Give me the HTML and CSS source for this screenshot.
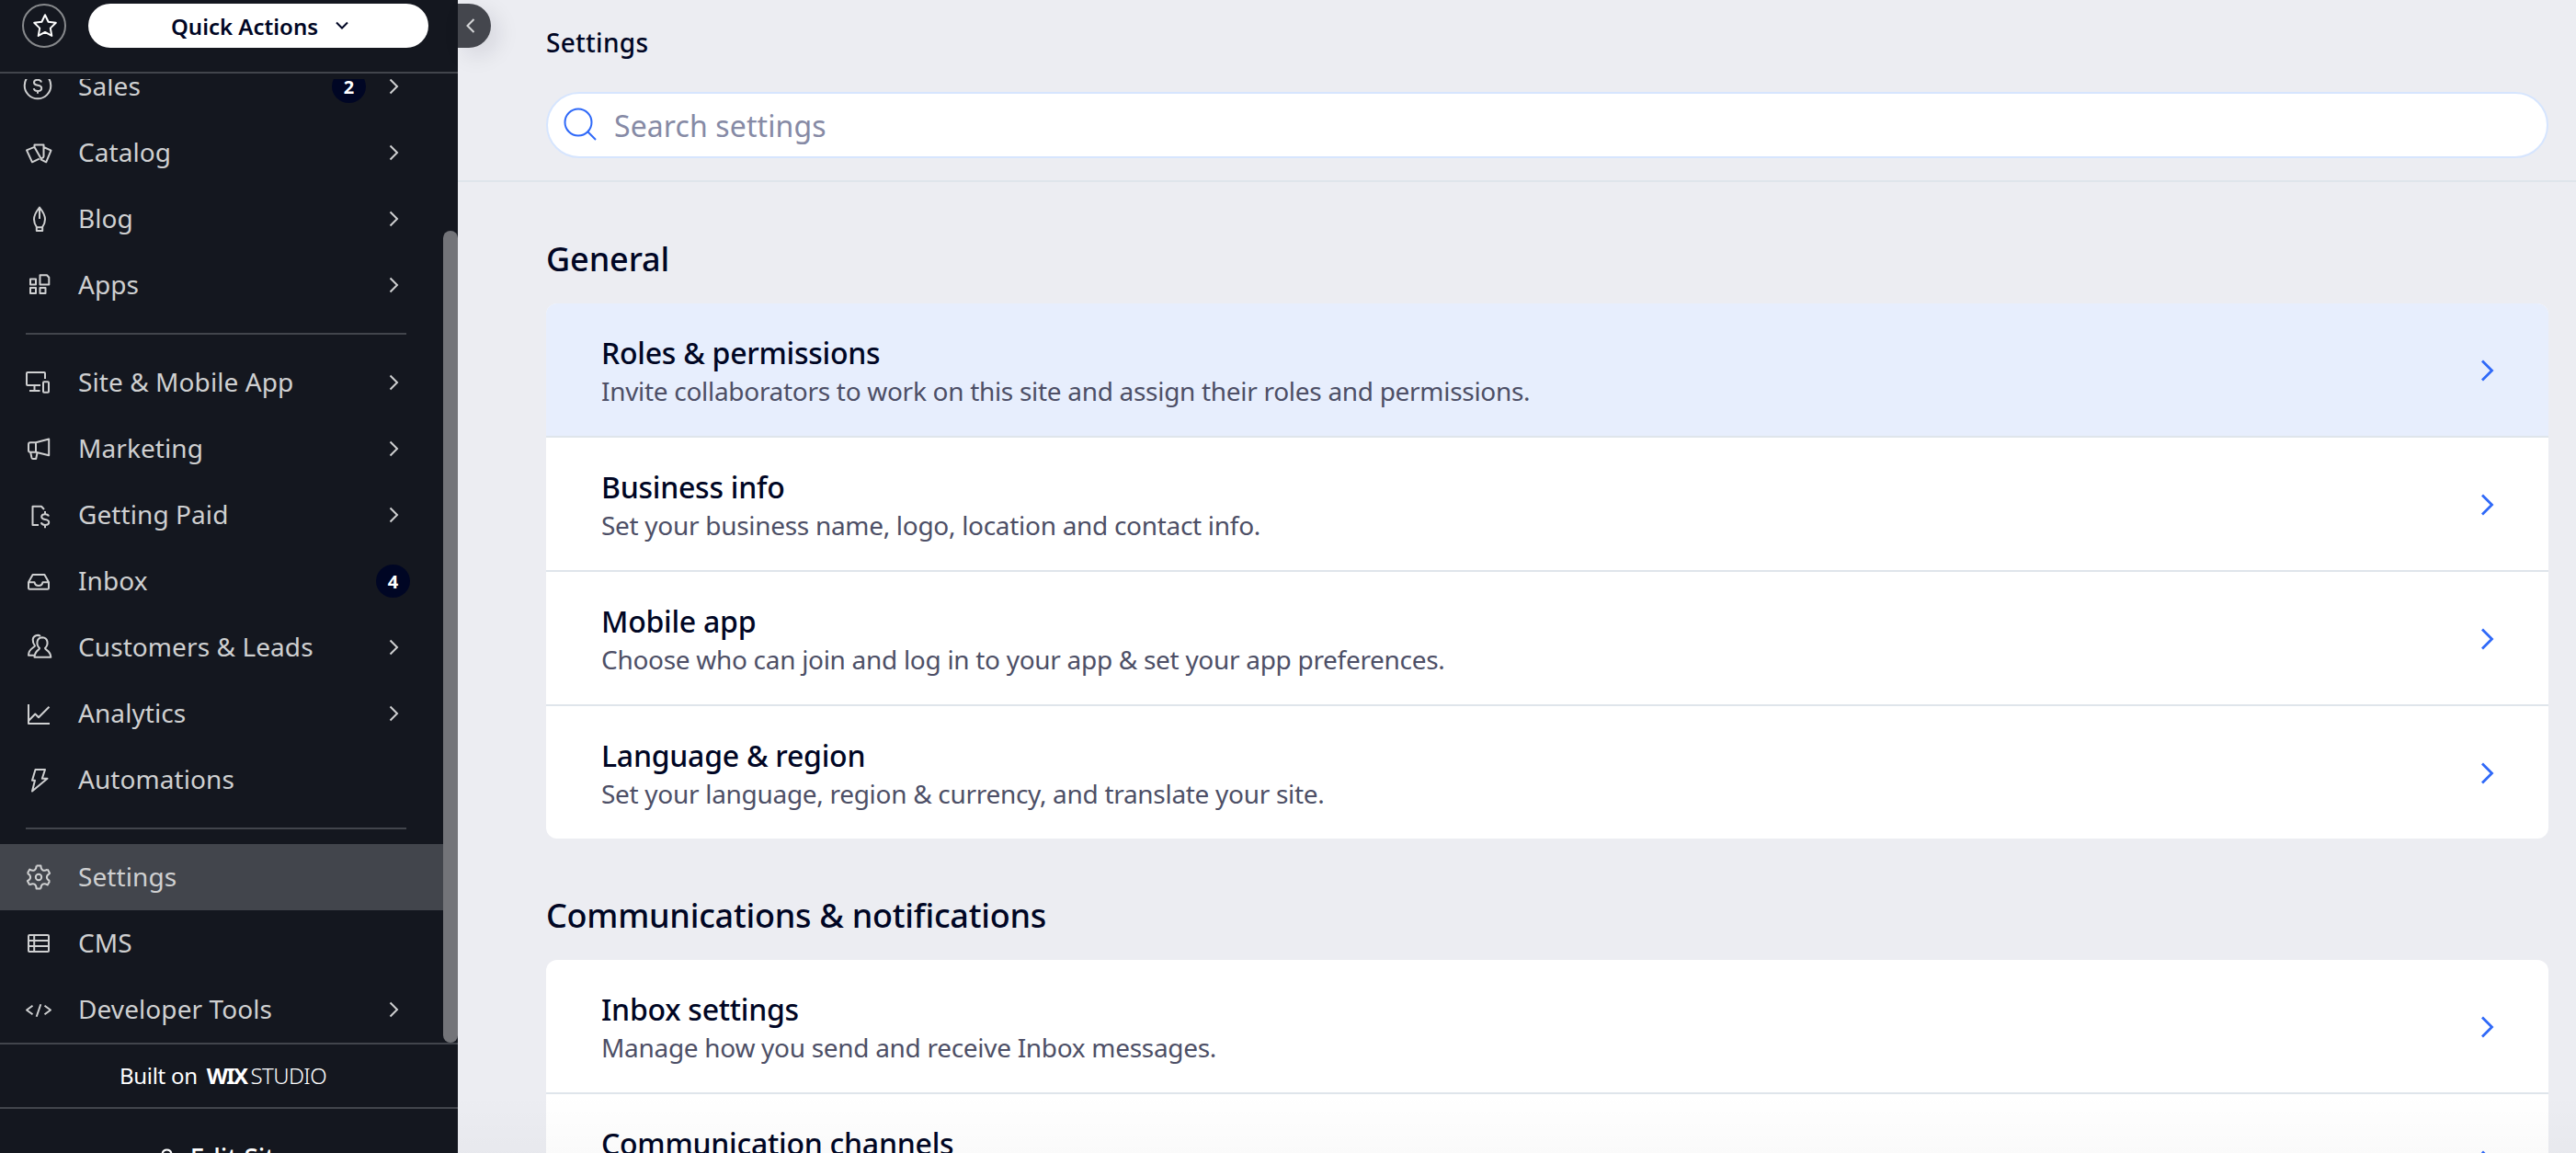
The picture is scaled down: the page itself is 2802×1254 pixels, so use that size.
FILE: index.html
```html
<!DOCTYPE html>
<html lang="en">

<head>
    <meta charset="UTF-8">
    <meta name="viewport" content="width=device-width, initial-scale=1.0">
    <title>Settings</title>
    <link rel="stylesheet" href="styles.css">
</head>

<body>
    <div class="app">
        <aside class="sidebar">
            <div class="sidebar-header">
                <button class="star-button">
                    <svg width="30" height="30" viewBox="0 0 30 30"><path d="M15 3.2l3.6 7.6 8.2 1-6 5.8 1.5 8.3-7.3-4-7.3 4 1.5-8.3-6-5.8 8.2-1z"/></svg>
                </button>
                <button class="quick-actions">
                    Quick Actions
                    <svg width="16" height="12" viewBox="0 0 16 12"><path d="M2 2.5l6 6 6-6"/></svg>
                </button>
            </div>

            <nav class="nav">
                <ul class="nav-list">
                    <li class="nav-item">
                        <svg class="icon" viewBox="0 0 36 36"><circle cx="17" cy="17" r="14.3"/><path d="M21 13.5c-.3-1.8-1.8-2.7-4-2.7s-4 1-4 3 1.8 2.7 4 3 4.2 1.2 4.2 3.2-2 3-4.2 3-4-1-4.2-2.8M17 8v2.8M17 23v2.8"/></svg>
                        <span class="label">Sales</span>
                        <span class="badge">2</span>
                        <svg class="chevron" viewBox="0 0 36 36"><path d="M14.5 10.5l7.5 7.5-7.5 7.5"/></svg>
                    </li>
                    <li class="nav-item">
                        <svg class="icon" viewBox="0 0 36 36"><path d="M13.5 11.8L5 15.3l6 13 7.8-3.6M13.5 9.5h10V22q-.2 2-3 2.3L13.5 12zM23.5 12l8 3.7-5.3 12.6-6.4-3.2"/></svg>
                        <span class="label">Catalog</span>
                        <svg class="chevron" viewBox="0 0 36 36"><path d="M14.5 10.5l7.5 7.5-7.5 7.5"/></svg>
                    </li>
                    <li class="nav-item">
                        <svg class="icon" viewBox="0 0 36 36"><path d="M19 5.5c-4 5-6 9-6 13 0 3.5 1 6 3 8.7h6c2-2.7 3-5.2 3-8.7 0-4-2-8-6-13zM19 5.5V18M15.8 27.2h6.4v3.7h-6.4z"/></svg>
                        <span class="label">Blog</span>
                        <svg class="chevron" viewBox="0 0 36 36"><path d="M14.5 10.5l7.5 7.5-7.5 7.5"/></svg>
                    </li>
                    <li class="nav-item">
                        <svg class="icon" viewBox="0 0 36 36"><path d="M9 11.5h6v6H9zM9 21h6v6H9zM19.5 21h6v6h-6zM19.5 7.2H27l2.3 2.5v7.8h-9.8z"/></svg>
                        <span class="label">Apps</span>
                        <svg class="chevron" viewBox="0 0 36 36"><path d="M14.5 10.5l7.5 7.5-7.5 7.5"/></svg>
                    </li>
                    <li class="nav-divider"></li>
                    <li class="nav-item">
                        <svg class="icon" viewBox="0 0 36 36"><path d="M25 14V8q0-1-1-1H6q-1 0-1 1v12q0 1 1 1h14M13.5 21v6M8 27h11.5"/><rect x="23" y="17.3" width="6" height="11.5" rx="1"/></svg>
                        <span class="label">Site &amp; Mobile App</span>
                        <svg class="chevron" viewBox="0 0 36 36"><path d="M14.5 10.5l7.5 7.5-7.5 7.5"/></svg>
                    </li>
                    <li class="nav-item">
                        <svg class="icon" viewBox="0 0 36 36"><path d="M15 11.2H9q-2 0-2 2v6.6q0 2 2 2h6zM15 11.2l14.2-3.7v17.8L15 21.8M9.2 22l1.3 6q.3 1 1.3 1h3.4l1.2-6"/></svg>
                        <span class="label">Marketing</span>
                        <svg class="chevron" viewBox="0 0 36 36"><path d="M14.5 10.5l7.5 7.5-7.5 7.5"/></svg>
                    </li>
                    <li class="nav-item">
                        <svg class="icon" viewBox="0 0 36 36"><path d="M24 12l-3-3.2h-9.5V29H18M29 19.5c-.4-1.6-1.8-2.3-4-2.3s-3.8.9-3.8 2.8 1.7 2.6 3.8 2.9 4.2 1 4.2 3.1-2 2.9-4.2 2.9-3.8-.8-4.2-2.6M25 14v3.2M25 28.9v3.3"/></svg>
                        <span class="label">Getting Paid</span>
                        <svg class="chevron" viewBox="0 0 36 36"><path d="M14.5 10.5l7.5 7.5-7.5 7.5"/></svg>
                    </li>
                    <li class="nav-item">
                        <svg class="icon" viewBox="0 0 36 36"><path d="M7 19.3l4.6-8.3h12.8l4.6 8.3v6.2q0 1.3-1.3 1.3H8.3Q7 26.8 7 25.5zM7 19.3h6.5c.5 2.5 2 3.7 4.5 3.7s4-1.2 4.5-3.7H29"/></svg>
                        <span class="label">Inbox</span>
                        <span class="badge">4</span>
                    </li>
                    <li class="nav-item">
                        <svg class="icon" viewBox="0 0 36 36"><path d="M19 19c-4-4-3.5-11.5 3-11.8 6.5.3 7 7.8 3 11.8 0 2 6 2.5 6.3 9.8H13.5C13.8 21.5 19 21 19 19z"/><path d="M20 6c-2.5-2.2-7.8-1-8.3 3.5-.2 3 .8 5 2.3 7-1.5 2.5-7 3-7 10.3h6"/></svg>
                        <span class="label">Customers &amp; Leads</span>
                        <svg class="chevron" viewBox="0 0 36 36"><path d="M14.5 10.5l7.5 7.5-7.5 7.5"/></svg>
                    </li>
                    <li class="nav-item">
                        <svg class="icon" viewBox="0 0 36 36"><path d="M7 8v21h23M7.5 25.5l6.8-7 3.7 3.7L29.5 10.7"/></svg>
                        <span class="label">Analytics</span>
                        <svg class="chevron" viewBox="0 0 36 36"><path d="M14.5 10.5l7.5 7.5-7.5 7.5"/></svg>
                    </li>
                    <li class="nav-item">
                        <svg class="icon" viewBox="0 0 36 36"><path d="M14.5 7H25l-3.2 9.8h5.7L11 30.5l3-11.7h-3z"/></svg>
                        <span class="label">Automations</span>
                    </li>
                    <li class="nav-divider"></li>
                    <li class="nav-item active">
                        <svg class="icon" viewBox="0 0 36 36">
                            <defs><path id="tooth" d="M15.6 5.4H20.4C20.4 10.4 23.4 12.1 27.7 9.6"/></defs>
                            <use href="#tooth"/>
                            <use href="#tooth" transform="rotate(60 18 18)"/>
                            <use href="#tooth" transform="rotate(120 18 18)"/>
                            <use href="#tooth" transform="rotate(180 18 18)"/>
                            <use href="#tooth" transform="rotate(240 18 18)"/>
                            <use href="#tooth" transform="rotate(300 18 18)"/>
                            <circle cx="18" cy="18" r="3.2"/>
                        </svg>
                        <span class="label">Settings</span>
                    </li>
                    <li class="nav-item">
                        <svg class="icon" viewBox="0 0 36 36"><rect x="7" y="9" width="22" height="18" rx="1"/><path d="M13.2 9v18M7 15h22M7 21h22"/></svg>
                        <span class="label">CMS</span>
                    </li>
                    <li class="nav-item">
                        <svg class="icon" viewBox="0 0 36 36"><path d="M11.5 13.8L5 18.5l6.5 4.7M24.5 13.8l6.5 4.7-6.5 4.7M20.3 12.2l-4.6 13.6"/></svg>
                        <span class="label">Developer Tools</span>
                        <svg class="chevron" viewBox="0 0 36 36"><path d="M14.5 10.5l7.5 7.5-7.5 7.5"/></svg>
                    </li>
                </ul>
                <div class="scrollbar">
                    <div class="scrollbar-thumb"></div>
                </div>
            </nav>

            <div class="built-on">
                <span class="built-text">Built on</span>
                <span class="brand-wix">WIX</span>
                <span class="brand-studio">STUDIO</span>
            </div>
            <div class="edit-site">
                <svg width="28" height="28" viewBox="0 0 28 28"><path d="M3.5 24V11q0-5.5 5-5.5t5 5.5v13z"/></svg>
                Edit Site
            </div>

            <button class="collapse">
                <svg width="12" height="18" viewBox="0 0 12 18"><path d="M9.5 2L2.5 9l7 7"/></svg>
            </button>
        </aside>

        <main class="main">
            <header class="page-header">
                <h1>Settings</h1>
                <div class="search">
                    <svg width="40" height="40" viewBox="0 0 40 40"><circle cx="17" cy="17" r="14.5"/><path d="M27.3 27.3L36 36"/></svg>
                    <input type="text" placeholder="Search settings">
                </div>
            </header>

            <section class="section">
                <h2>General</h2>
                <div class="card">
                    <div class="card-row hovered">
                        <div class="card-text">
                            <h3>Roles &amp; permissions</h3>
                            <p>Invite collaborators to work on this site and assign their roles and permissions.</p>
                        </div>
                        <svg class="arrow" viewBox="0 0 24 28"><path d="M6 3.5L16.5 14 6 24.5"/></svg>
                    </div>
                    <div class="card-row">
                        <div class="card-text">
                            <h3>Business info</h3>
                            <p>Set your business name, logo, location and contact info.</p>
                        </div>
                        <svg class="arrow" viewBox="0 0 24 28"><path d="M6 3.5L16.5 14 6 24.5"/></svg>
                    </div>
                    <div class="card-row">
                        <div class="card-text">
                            <h3>Mobile app</h3>
                            <p>Choose who can join and log in to your app &amp; set your app preferences.</p>
                        </div>
                        <svg class="arrow" viewBox="0 0 24 28"><path d="M6 3.5L16.5 14 6 24.5"/></svg>
                    </div>
                    <div class="card-row">
                        <div class="card-text">
                            <h3>Language &amp; region</h3>
                            <p>Set your language, region &amp; currency, and translate your site.</p>
                        </div>
                        <svg class="arrow" viewBox="0 0 24 28"><path d="M6 3.5L16.5 14 6 24.5"/></svg>
                    </div>
                </div>
            </section>

            <section class="section">
                <h2 class="wide">Communications &amp; notifications</h2>
                <div class="card">
                    <div class="card-row">
                        <div class="card-text">
                            <h3>Inbox settings</h3>
                            <p>Manage how you send and receive Inbox messages.</p>
                        </div>
                        <svg class="arrow" viewBox="0 0 24 28"><path d="M6 3.5L16.5 14 6 24.5"/></svg>
                    </div>
                    <div class="card-row">
                        <div class="card-text">
                            <h3>Communication channels</h3>
                        </div>
                        <svg class="arrow" viewBox="0 0 24 28"><path d="M6 3.5L16.5 14 6 24.5"/></svg>
                    </div>
                </div>
            </section>
            <div class="bottom-shade"></div>
        </main>
    </div>
</body>

</html>
```
FILE: styles.css
```css
:root {
    --sidebar: #14171f;
    --sidebar-line: #42454c;
    --sidebar-text: #cfd0d1;
    --page: #ecedf2;
    --ink: #000624;
    --ink-soft: #4d4f66;
    --blue: #2f69f8;
    --line: #dfe5eb;
}

* {
    box-sizing: border-box;
    margin: 0;
    padding: 0;
}

body {
    font-family: 'Noto Sans', sans-serif;
    background: var(--page);
    color: var(--ink);
    overflow: hidden;
}

button {
    border: none;
    font-family: inherit;
    cursor: pointer;
}

svg {
    fill: none;
    stroke: currentColor;
    stroke-width: 2;
    flex-shrink: 0;
}

.app {
    display: flex;
    height: 100vh;
}

/* Sidebar */

.sidebar {
    position: relative;
    z-index: 1;
    display: flex;
    flex-direction: column;
    flex-shrink: 0;
    width: 498px;
    height: 100vh;
    background: var(--sidebar);
    color: var(--sidebar-text);
}

.sidebar-header {
    display: flex;
    flex-shrink: 0;
    gap: 24px;
    height: 80px;
    padding: 4px 32px 0 24px;
    border-bottom: 2px solid var(--sidebar-line);
}

.star-button {
    display: flex;
    align-items: center;
    justify-content: center;
    width: 48px;
    height: 48px;
    border: 2px solid #87898c;
    border-radius: 50%;
    background: none;
    color: #fff;
}

.star-button svg {
    stroke-linejoin: round;
    margin-left: 2px;
}

.quick-actions {
    display: flex;
    align-items: center;
    justify-content: center;
    gap: 18px;
    width: 370px;
    height: 48px;
    padding-left: 4px;
    border-radius: 24px;
    background: #fff;
    color: var(--ink);
    font-size: 24px;
    font-weight: 600;
}

.nav {
    display: flex;
    flex-shrink: 0;
    height: 1048px;
    margin-top: 6px;
    overflow: hidden;
}

/* scrolled down part of the first row */
.nav-list {
    flex: 1;
    margin-top: -28px;
    list-style: none;
}

.nav-item {
    display: flex;
    align-items: center;
    gap: 12px;
    height: 72px;
    padding: 0 36px 0 24px;
    font-size: 28px;
    letter-spacing: 0.08px;
}

.nav-item.active {
    background: var(--sidebar-line);
}

.nav-divider {
    height: 2px;
    margin: 16px 40px 16px 28px;
    background: var(--sidebar-line);
}

.icon,
.chevron {
    width: 36px;
    height: 36px;
}

.icon {
    stroke-linejoin: round;
}

.label {
    flex: 1;
    padding: 0 0 2px 13px;
    white-space: nowrap;
}

.badge {
    display: flex;
    align-items: center;
    justify-content: center;
    width: 37px;
    height: 36px;
    border-radius: 50%;
    background: #000624;
    color: #fff;
    font-size: 20px;
    font-weight: 700;
}

.scrollbar {
    width: 16px;
    padding-top: 165px;
}

.scrollbar-thumb {
    height: 883px;
    border-radius: 8px;
    background: #737479;
}

.built-on {
    display: flex;
    align-items: center;
    flex-shrink: 0;
    height: 72px;
    padding: 0 0 2px 130px;
    border-top: 2px solid var(--sidebar-line);
    border-bottom: 2px solid var(--sidebar-line);
    color: #fff;
    font-size: 24px;
}

.built-text {
    letter-spacing: -0.3px;
    margin-right: 10px;
}

.brand-wix {
    font-weight: 700;
    letter-spacing: -1.6px;
    margin-right: 4px;
}

.brand-studio {
    font-weight: 300;
    letter-spacing: -0.6px;
}

.edit-site {
    display: flex;
    align-items: center;
    justify-content: center;
    gap: 6px;
    flex-shrink: 0;
    height: 106px;
    padding-right: 10px;
    color: #fff;
    font-size: 28px;
    font-weight: 500;
}

.collapse {
    position: absolute;
    top: 4px;
    left: 498px;
    width: 36px;
    height: 48px;
    padding: 4px 8px 0 0;
    border-radius: 0 24px 24px 0;
    background: #44464d;
    color: #d5d6d8;
    box-shadow: 8px 8px 24px rgba(0, 6, 36, 0.1);
}

/* Main */

.main {
    position: relative;
    flex: 1;
    overflow: hidden;
}

.page-header {
    height: 198px;
    padding: 28px 30px 0 96px;
    border-bottom: 2px solid var(--line);
}

h1 {
    margin-bottom: 36px;
    font-size: 28px;
    font-weight: 475;
    line-height: 36px;
    letter-spacing: 0.3px;
}

.search {
    display: flex;
    align-items: center;
    height: 72px;
    padding-left: 16px;
    border: 2px solid #d6e5fe;
    border-radius: 36px;
    background: #fff;
}

.search svg {
    color: var(--blue);
}

.search input {
    flex: 1;
    margin-left: 16px;
    border: none;
    outline: none;
    background: none;
    color: var(--ink);
    font-family: inherit;
    font-size: 32px;
    letter-spacing: 0.1px;
}

.search input::placeholder {
    color: #868aa5;
}

.section {
    padding: 60px 30px 0 96px;
}

h2 {
    margin-bottom: 24px;
    font-size: 36px;
    font-weight: 475;
    line-height: 48px;
    letter-spacing: -0.1px;
}

h2.wide {
    letter-spacing: -0.25px;
}

.card {
    border-radius: 12px;
    background: #fff;
    overflow: hidden;
}

.card-row {
    display: flex;
    align-items: center;
    justify-content: space-between;
    height: 144px;
    padding: 0 54px 0 60px;
}

.card-row + .card-row {
    height: 146px;
    border-top: 2px solid var(--line);
}

.card-row.hovered {
    background: #e7eefd;
}

.card-text {
    align-self: flex-start;
    padding-top: 32px;
}

h3 {
    font-size: 32px;
    font-weight: 475;
    line-height: 44px;
    letter-spacing: -0.25px;
}

.card-text p {
    margin-top: -1px;
    color: var(--ink-soft);
    font-size: 28px;
    line-height: 40px;
    letter-spacing: -0.3px;
}

.arrow {
    width: 24px;
    height: 28px;
    margin-top: 2px;
    color: var(--blue);
    stroke-width: 2.8;
}

.bottom-shade {
    position: absolute;
    left: 0;
    right: 0;
    bottom: 0;
    height: 64px;
    background: linear-gradient(rgba(0, 0, 0, 0), rgba(0, 0, 0, 0.02));
    pointer-events: none;
}
```
